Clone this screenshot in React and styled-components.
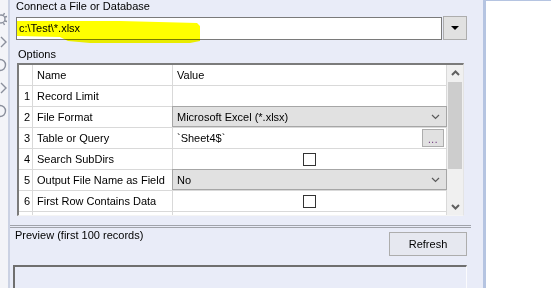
import React from 'react'
import styled, { createGlobalStyle } from 'styled-components'

const GlobalStyle = createGlobalStyle`
  html, body {
    margin: 0;
    padding: 0;
  }
  body {
    width: 551px;
    height: 288px;
    overflow: hidden;
    font-family: "Liberation Sans", Arial, sans-serif;
    font-size: 11px;
    color: #000;
  }
`

const Page = styled.div`
  display: flex;
  width: 551px;
  height: 288px;
  overflow: hidden;
`

const LeftStrip = styled.div`
  flex: none;
  width: 8px;
  background: #f3f4f8;
  border-right: 2px solid #cbd2e3;
  display: flex;
  flex-direction: column;
  padding-top: 12px;
  gap: 9px;
  overflow: hidden;
`

const Main = styled.div`
  flex: none;
  width: 473px;
  position: relative;
  background: #e9ecf8;
  display: flex;
  flex-direction: column;
  overflow: hidden;
`

const Divider = styled.div`
  flex: none;
  width: 3px;
  background: #b5c4e1;
`

const SidePanel = styled.div`
  flex: 1;
  background: #fff;
  border-top: 1px solid #b5c4e1;
`

const Section = styled.div`
  padding: 0 16px 0 6px;
  display: flex;
  flex-direction: column;
`

const Caption = styled.div`
  height: ${p => p.$h}px;
  padding-top: ${p => p.$top || 0}px;
  padding-left: ${p => p.$left || 0}px;
  line-height: 13px;
  box-sizing: border-box;
  white-space: nowrap;
`

const InputRow = styled.div`
  display: flex;
  align-items: flex-start;
  gap: 1px;
`

const TextBox = styled.div`
  margin-top: 1px;
  width: 427px;
  height: 23px;
  box-sizing: border-box;
  border: 1px solid #7a7a7a;
  background: #fff;
  padding-left: 2px;
  line-height: 20px;
`

const DropButton = styled.div`
  width: 24px;
  height: 24px;
  box-sizing: border-box;
  background: #e1e1e1;
  border: 1px solid #adadad;
  display: flex;
  align-items: center;
  justify-content: center;
`

const Highlight = styled.svg`
  position: absolute;
  left: 0;
  top: 0;
  mix-blend-mode: multiply;
  pointer-events: none;
`

const GridFrame = styled.div`
  margin-left: 1px;
  width: 447px;
  height: 153px;
  box-sizing: border-box;
  border-top: 2px solid #7b7b7b;
  border-left: 2px solid #7b7b7b;
  border-right: 1px solid #e4e4e4;
  border-bottom: 1px solid #f4f4f4;
  background: #fff;
  display: flex;
  overflow: hidden;
`

const Table = styled.div`
  flex: none;
  width: 428px;
  display: grid;
  grid-template-columns: 14px 140px 274px;
  grid-auto-rows: 21px;
  align-content: start;
`

const Cell = styled.div`
  box-sizing: border-box;
  border-right: 1px solid #d9d9d9;
  border-bottom: 1px solid #d9d9d9;
  padding-left: ${p => p.$pad ?? 4}px;
  display: flex;
  align-items: center;
  justify-content: ${p => (p.$center ? 'center' : 'flex-start')};
  white-space: nowrap;
  position: relative;
`

const Combo = styled.div`
  position: absolute;
  left: -1px;
  top: -1px;
  right: -1px;
  bottom: 0;
  background: #e1e1e1;
  border: 1px solid #a6a6a6;
  display: flex;
  align-items: center;
  justify-content: space-between;
  padding: 0 6px 0 4px;
`

const EllipsisButton = styled.div`
  position: absolute;
  right: 2px;
  top: 1px;
  width: 22px;
  height: 18px;
  box-sizing: border-box;
  background: #e1e1e1;
  border: 1px solid #adadad;
  color: #6a2f7a;
  font-size: 10px;
  display: flex;
  align-items: flex-end;
  justify-content: center;
  line-height: 12px;
  letter-spacing: 0.5px;
`

const CheckBox = styled.div`
  width: 13px;
  height: 13px;
  box-sizing: border-box;
  border: 1px solid #333;
  background: #fff;
`

const ScrollBar = styled.div`
  flex: none;
  width: 16px;
  background: #f0f0f0;
  display: flex;
  flex-direction: column;
  align-items: center;
`

const ScrollArrow = styled.div`
  height: 16px;
  display: flex;
  align-items: center;
  justify-content: center;
`

const Thumb = styled.div`
  margin-top: 1px;
  width: 14px;
  height: 87px;
  background: #cdcdcd;
`

const Spacer = styled.div`
  flex: 1;
`

const Separator = styled.div`
  margin: 9px 12px 0 0;
  height: 4px;
  box-sizing: border-box;
  border-top: 1px solid #a0a3aa;
  border-bottom: 1px solid #a0a3aa;
`

const PreviewRow = styled.div`
  display: flex;
  justify-content: space-between;
  padding: 0 16px 0 5px;
`

const RefreshButton = styled.div`
  margin-top: 4px;
  width: 78px;
  height: 24px;
  box-sizing: border-box;
  background: #e6e8f0;
  border: 1px solid #adadad;
  display: flex;
  align-items: center;
  justify-content: center;
`

const PreviewBox = styled.div`
  margin: 9px 16px 0 3px;
  height: 40px;
  box-sizing: border-box;
  border-top: 2px solid #6f6f6f;
  border-left: 2px solid #6f6f6f;
  border-right: 1px solid #fbfbfd;
  background: #e9ecf8;
`

const Chevron = ({ up, bold, color = '#555' }) => (
  <svg width="9" height="6" viewBox="0 0 9 6">
    <path
      d={up ? 'M1 5 L4.5 1.5 L8 5' : 'M1 1 L4.5 4.5 L8 1'}
      fill="none"
      stroke={color}
      strokeWidth={bold ? 2 : 1.2}
    />
  </svg>
)

const StripIcon = ({ kind }) => (
  <svg width="8" height="14" viewBox="0 0 8 14" style={{ flex: 'none' }}>
    {kind === 'gear' && (
      <g fill="none" stroke="#8a8f9c" strokeWidth="1.4">
        <circle cx="1" cy="7" r="4" />
        <path d="M5 5 L7 4.5 M5 9 L7 9.5 M3.5 3 L4.5 1 M3.5 11 L4.5 13" />
      </g>
    )}
    {kind === 'chev' && <path d="M1 2 L6 7 L1 12" fill="none" stroke="#8a8f9c" strokeWidth="1.4" />}
    {kind === 'arc' && <path d="M0 1.5 A5.5 5.5 0 0 1 0 12.5" fill="none" stroke="#8a8f9c" strokeWidth="1.4" />}
  </svg>
)

const rows = [
  { n: 1, name: 'Record Limit' },
  { n: 2, name: 'File Format', combo: 'Microsoft Excel (*.xlsx)' },
  { n: 3, name: 'Table or Query', text: '`Sheet4$`', ellipsis: true },
  { n: 4, name: 'Search SubDirs', check: true },
  { n: 5, name: 'Output File Name as Field', combo: 'No' },
  { n: 6, name: 'First Row Contains Data', check: true },
  { n: 7, name: '' },
]

export default function App() {
  return (
    <Page>
      <GlobalStyle />
      <LeftStrip>
        <StripIcon kind="gear" />
        <StripIcon kind="chev" />
        <StripIcon kind="arc" />
        <StripIcon kind="chev" />
        <StripIcon kind="arc" />
      </LeftStrip>
      <Main>
        <Section>
          <Caption $h={16}>Connect a File or Database</Caption>
          <InputRow>
            <TextBox>c:\Test\*.xlsx</TextBox>
            <DropButton>
              <svg width="8" height="4" viewBox="0 0 8 4">
                <path d="M0 0 H8 L4 4 Z" fill="#000" />
              </svg>
            </DropButton>
          </InputRow>
          <Caption $h={23} $top={8} $left={2}>Options</Caption>
          <GridFrame>
            <Table>
              <Cell $pad={0} />
              <Cell>Name</Cell>
              <Cell>Value</Cell>
              {rows.map(r => (
                <React.Fragment key={r.n}>
                  <Cell $pad={5}>{r.n < 7 ? r.n : ''}</Cell>
                  <Cell>{r.name}</Cell>
                  <Cell $center={r.check} $pad={r.check ? 0 : 4}>
                    {r.combo && (
                      <Combo>
                        <span>{r.combo}</span>
                        <Chevron color="#5a5a5a" />
                      </Combo>
                    )}
                    {r.text}
                    {r.ellipsis && <EllipsisButton>...</EllipsisButton>}
                    {r.check && <CheckBox />}
                  </Cell>
                </React.Fragment>
              ))}
            </Table>
            <ScrollBar>
              <ScrollArrow>
                <Chevron up bold color="#606060" />
              </ScrollArrow>
              <Thumb />
              <Spacer />
              <ScrollArrow>
                <Chevron bold color="#606060" />
              </ScrollArrow>
            </ScrollBar>
          </GridFrame>
        </Section>
        <Separator />
        <PreviewRow>
          <Caption $h={28} $top={1}>Preview (first 100 records)</Caption>
          <RefreshButton>Refresh</RefreshButton>
        </PreviewRow>
        <PreviewBox />
        <Highlight width="473" height="60" viewBox="0 0 473 60">
          <polygon
            points="7,21 110,21 187,23 190,26 190,41 180,43 80,43 58,41 50,37 7,36"
            fill="#ffff00"
          />
        </Highlight>
      </Main>
      <Divider />
      <SidePanel />
    </Page>
  )
}
